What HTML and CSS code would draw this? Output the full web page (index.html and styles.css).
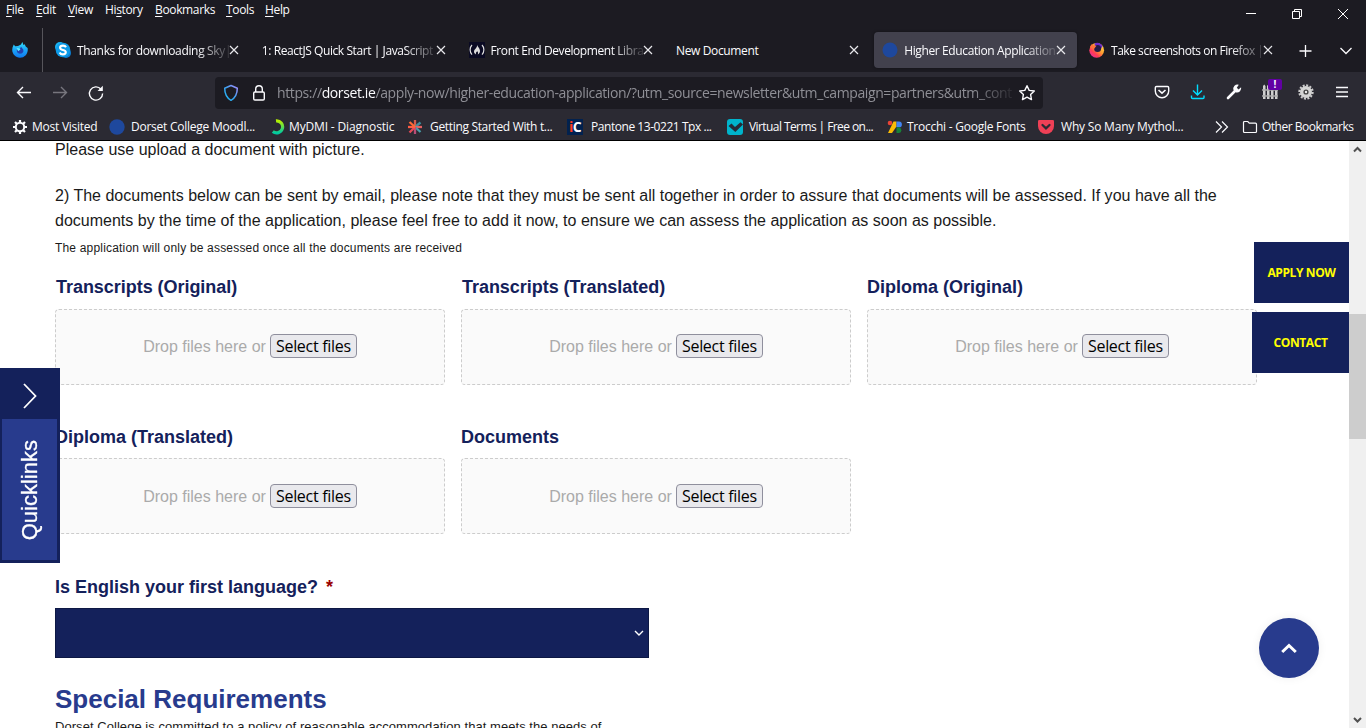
FILE: index.html
```html
<!DOCTYPE html>
<html lang="en">
<head>
<meta charset="utf-8">
<title>Higher Education Application</title>
<link rel="stylesheet" href="styles.css">
</head>
<body>
<div class="window">
  <header class="chrome">
    <div class="menubar">
      <nav class="menus"><span class="m1"><u>F</u>ile</span><span class="m2"><u>E</u>dit</span><span class="m3"><u>V</u>iew</span><span class="m4">Hi<u>s</u>tory</span><span class="m5"><u>B</u>ookmarks</span><span class="m6"><u>T</u>ools</span><span class="m7"><u>H</u>elp</span></nav>
      <div class="winctl">
        <svg width="46" height="28" viewBox="0 0 46 28"><path d="M18 13.500h10" stroke="#fff"/></svg>
        <svg width="46" height="28" viewBox="0 0 46 28"><path d="M18.500 11.500h7v7h-7zM20.500 11v-1.500h7v7H26" stroke="#fff" fill="none"/></svg>
        <svg width="46" height="28" viewBox="0 0 46 28"><path d="M18 9l10 10M28 9l-10 10" stroke="#fff" fill="none"/></svg>
      </div>
    </div>

    <div class="tabbar">
      <div class="pinned">
        <svg width="16" height="16" viewBox="0 0 16 16"><defs><linearGradient id="fx" x1="0" y1="0" x2="0" y2="1"><stop offset="0" stop-color="#35e0fb"/><stop offset=".5" stop-color="#1ba5f8"/><stop offset="1" stop-color="#0f78ee"/></linearGradient></defs><path d="M1.800 2.600l1.300 1.700L6 4l3-1.600L10.300 0l1.200 3 1.200-.8 1 2.200L15.600 6c1 5-2.600 9.700-7.600 9.700S-.6 11 .4 6.500C.6 5 1.200 4 1.800 2.600z" fill="url(#fx)"/><path d="M5 7l2.500.7L9 4.800l2.200 2.700c.8 2.500-.8 4.200-3.200 4.200S4.300 9.700 5 7z" fill="#2340b0"/><path d="M4.500 6l2.500.2L8.500 7.500l-2.300 1.700z" fill="#5be9ff"/></svg>
      </div>
      <div class="tabs">
        <div class="tab">
          <svg class="ico" width="16" height="16" viewBox="0 0 16 16"><rect width="10" height="10" rx="5" fill="#1ab4f3"/><rect x="6" y="6" width="10" height="10" rx="5" fill="#0c7fd4"/><circle cx="8" cy="8" r="7.300" fill="#0d9be8"/><path d="M11 5.200C10.400 4 9.300 3.600 8 3.600c-1.700 0-2.900.8-2.900 2.100 0 3 5.700 1.500 5.700 4.400 0 1.500-1.200 2.300-2.900 2.300-1.500 0-2.600-.6-3.200-1.900" fill="none" stroke="#fff" stroke-width="2.100"/></svg>
          <span class="t t1">Thanks for downloading Sky|</span>
          <svg class="x" width="10" height="10" viewBox="0 0 10 10"><path d="M1 1l8 8M9 1L1 9"/></svg>
        </div>
        <div class="tab">
          <span class="t t2">1: ReactJS Quick Start | JavaScript</span>
          <svg class="x" width="10" height="10" viewBox="0 0 10 10"><path d="M1 1l8 8M9 1L1 9"/></svg>
        </div>
        <div class="tab">
          <svg class="ico" width="16" height="16" viewBox="0 0 16 16"><rect width="16" height="16" fill="#0a0a23"/><path d="M3 3C.5 5.500.5 10 3 12.700M13 3c2.500 2.500 2.500 7 0 9.700" stroke="#ddd" fill="none" stroke-width="1.200"/><path d="M8 2.700c.5 2.300 3.300 3.700 3 6.500-.2 1.800-1.200 2.600-2.200 3.200.5-1.500.3-2.400-.7-3.100-.7.900-1.700 1.400-1 3.100-1.600-.6-2.400-2-2-3.600C5.600 6.800 8.500 6 8 2.700z" fill="#ddd"/></svg>
          <span class="t t3">Front End Development Libra</span>
          <svg class="x" width="10" height="10" viewBox="0 0 10 10"><path d="M1 1l8 8M9 1L1 9"/></svg>
        </div>
        <div class="tab">
          <span class="t t4">New Document</span>
          <svg class="x" width="10" height="10" viewBox="0 0 10 10"><path d="M1 1l8 8M9 1L1 9"/></svg>
        </div>
        <div class="tab active">
          <svg class="ico" width="16" height="16" viewBox="0 0 16 16"><circle cx="8" cy="8" r="7.500" fill="#1e489d"/></svg>
          <span class="t t5">Higher Education Application</span>
          <svg class="x" width="10" height="10" viewBox="0 0 10 10"><path d="M1 1l8 8M9 1L1 9"/></svg>
        </div>
        <div class="tab">
          <svg class="ico" width="16" height="16" viewBox="0 0 16 16"><defs><linearGradient id="fm" x1=".9" y1=".1" x2=".2" y2=".9"><stop offset="0" stop-color="#ffe14a"/><stop offset=".45" stop-color="#ff9a30"/><stop offset=".75" stop-color="#ff3d52"/><stop offset="1" stop-color="#f0308a"/></linearGradient></defs><circle cx="7.700" cy="8.300" r="7.400" fill="url(#fm)"/><path d="M5.500 1.500C8 0 12 .5 13.500 4.500L11 8 6 5z" fill="#6c2bd0"/><circle cx="8.600" cy="6.600" r="3.500" fill="#241c45"/><path d="M1 4.500l2-2.500 1 1.500 3.500.3L5 7z" fill="#ff7139"/></svg>
          <span class="t t6">Take screenshots on Firefox |</span>
          <svg class="x" width="10" height="10" viewBox="0 0 10 10"><path d="M1 1l8 8M9 1L1 9"/></svg>
        </div>
      </div>
      <div class="tabtools">
        <svg width="40" height="44" viewBox="0 0 40 44"><path d="M19.500 17v12M13.500 23h12" stroke="#fbfbfe" stroke-width="1.300"/></svg>
        <svg width="40" height="44" viewBox="0 0 40 44"><path d="M14.500 20l5.500 5.500 5.500-5.500" stroke="#fbfbfe" fill="none" stroke-width="1.300"/></svg>
      </div>
    </div>

    <div class="navbar">
      <div class="navbtns">
        <svg width="36" height="41" viewBox="0 0 36 41"><path d="M31 20.500H17.500M23 15l-5.500 5.500L23 26" stroke="#fbfbfe" fill="none" stroke-width="1.400"/></svg>
        <svg width="36" height="41" viewBox="0 0 36 41"><path d="M17 20.500h13.500M25 15l5.500 5.500L25 26" stroke="#77767e" fill="none" stroke-width="1.400"/></svg>
        <svg width="36" height="41" viewBox="0 0 36 41"><path d="M29 17.200A6.600 6.600 0 1 0 30.600 21.500" stroke="#fbfbfe" fill="none" stroke-width="1.400"/><path d="M30.800 13.800v5.200h-5.200z" fill="#fbfbfe"/></svg>
      </div>
      <div class="urlbar">
        <svg width="16" height="18" viewBox="0 0 16 18"><defs><linearGradient id="sh" x1="0" y1="1" x2="1" y2="0"><stop offset="0" stop-color="#18b9f5"/><stop offset=".5" stop-color="#3ea0f0"/><stop offset="1" stop-color="#a88cff"/></linearGradient></defs><path d="M8 1.500L14.300 4.200c0 5.300-1.800 9.500-6.300 12.100C3.500 13.700 1.700 9.500 1.700 4.200z" fill="none" stroke="url(#sh)" stroke-width="1.500" stroke-linejoin="round"/></svg>
        <svg width="14" height="18" viewBox="0 0 14 18"><rect x="1.700" y="8" width="10.600" height="8" rx="1.200" fill="none" stroke="#fbfbfe" stroke-width="1.400"/><path d="M3.700 8V5a3.300 3.300 0 0 1 6.600 0v3" fill="none" stroke="#fbfbfe" stroke-width="1.400"/></svg>
        <span class="url">https://<b>dorset.ie</b>/apply-now/higher-education-application/?utm_source=newsletter&amp;utm_campaign=partners&amp;utm_cont</span>
        <svg width="18" height="18" viewBox="0 0 18 18"><path d="M9 1.700l2.200 4.700 5.100.6-3.700 3.500.9 5.100L9 13.100l-4.500 2.500.9-5.100L1.700 7l5.100-.6z" fill="none" stroke="#fbfbfe" stroke-width="1.400" stroke-linejoin="round"/></svg>
      </div>
      <div class="tools">
        <svg width="36" height="41" viewBox="0 0 36 41"><path d="M12.500 14.500h11a1.200 1.200 0 0 1 1.200 1.200V19a6.700 6.700 0 0 1-13.400 0v-3.300a1.200 1.200 0 0 1 1.200-1.200z" fill="none" stroke="#fbfbfe" stroke-width="1.400"/><path d="M14.500 18l3.500 3.200 3.500-3.200" fill="none" stroke="#fbfbfe" stroke-width="1.600"/></svg>
        <svg width="36" height="41" viewBox="0 0 36 41"><path d="M17.500 12.500v10M13 18.500l4.500 4.500 4.500-4.500M11.500 23.500v2a1 1 0 0 0 1 1h10.500a1 1 0 0 0 1-1v-2" fill="none" stroke="#00ddff" stroke-width="1.400"/></svg>
        <svg width="36" height="41" viewBox="0 0 36 41"><path d="M12 26l7-7" stroke="#fbfbfe" stroke-width="2.600" stroke-linecap="round"/><path d="M22.800 12.700a4.300 4.300 0 0 0-5.300 5.500l2.600 2.300a4.300 4.300 0 0 0 5-5.200l-2.600 2.100-1.700-1.700z" fill="#fbfbfe"/></svg>
        <div class="ext">
          <svg width="36" height="41" viewBox="0 0 36 41"><path d="M11 27V14l1.200-1.500L13.500 14v13zM15 27V14l1.200-1.500L17.500 14v13zM19 27V15h2.500v12zM23 27V15h2.500v12z" fill="#d0d0d0"/><path d="M10 18h16M10 24h16" stroke="#aaa" stroke-width="1.400"/></svg>
          <span class="badge">!</span>
        </div>
        <svg width="36" height="41" viewBox="0 0 36 41"><circle cx="18" cy="20" r="6.600" fill="none" stroke="#ccc" stroke-width="2.200" stroke-dasharray="2 1.450"/><circle cx="18" cy="20" r="4.300" fill="#444" stroke="#d4d4d4" stroke-width="3.400"/><circle cx="18" cy="20" r="1.200" fill="#eee"/></svg>
        <svg width="36" height="41" viewBox="0 0 36 41"><path d="M12 15.500h12M12 20h12M12 24.500h12" stroke="#fbfbfe" stroke-width="1.300"/></svg>
      </div>
    </div>

    <div class="bookmarks">
      <div class="bm b1"><svg width="16" height="16" viewBox="0 0 16 16"><path d="M8 1v14M1 8h14M3 3l10 10M13 3L3 13" stroke="#fbfbfe" stroke-width="2.200"/><circle cx="8" cy="8" r="4.200" fill="#2b2a33" stroke="#fbfbfe" stroke-width="2"/></svg><span>Most Visited</span></div>
      <div class="bm b2"><svg width="16" height="16" viewBox="0 0 16 16"><circle cx="8" cy="8" r="7.700" fill="#1e489d"/></svg><span>Dorset College Moodl...</span></div>
      <div class="bm b3"><svg width="16" height="16" viewBox="0 0 16 16"><defs><linearGradient id="dm" x1="0" y1="0" x2="0" y2="1"><stop offset="0" stop-color="#b6f000"/><stop offset="1" stop-color="#00c8a0"/></linearGradient></defs><path d="M5 1.900A6 6 0 1 1 1.800 12.500" fill="none" stroke="url(#dm)" stroke-width="3.200"/></svg><span>MyDMI - Diagnostic</span></div>
      <div class="bm b4"><svg width="16" height="16" viewBox="0 0 16 16" stroke-width="2.300"><path d="M8 8V1" stroke="#d35b4a"/><path d="M8 8l5.500-4.500" stroke="#3f8d9b"/><path d="M8 8h7" stroke="#e46262"/><path d="M8 8l5.500 5" stroke="#4a9da8"/><path d="M8 8v7" stroke="#b94d76"/><path d="M8 8l-5.500 5.500" stroke="#e44a58"/><path d="M8 8H1" stroke="#ff5d45"/><path d="M8 8L2.500 3" stroke="#ff6a35"/></svg><span>Getting Started With t...</span></div>
      <div class="bm b5"><span class="ic"><i>i</i>C</span><span>Pantone 13-0221 Tpx ...</span></div>
      <div class="bm b6"><svg width="16" height="16" viewBox="0 0 16 16"><rect width="16" height="16" rx="3" fill="#00b4cc"/><path d="M1.500 7l3-2.500L8 8l5.500-4.800L16 5.500 8.300 13z" fill="#252b38"/></svg><span>Virtual Terms | Free on...</span></div>
      <div class="bm b7"><svg width="16" height="16" viewBox="0 0 16 16"><circle cx="3" cy="4" r="2.300" fill="#ea4335"/><path d="M6.500 2.500h3v5L5 14H1z" fill="#fbbc04"/><path d="M9.500 2.500H12a2.900 2.900 0 0 1 0 5.800H9.500z" fill="#4285f4"/><path d="M9.500 8.300H12a2.900 2.900 0 0 1 0 5.700H9.500z" fill="#188038"/></svg><span>Trocchi - Google Fonts</span></div>
      <div class="bm b8"><svg width="16" height="16" viewBox="0 0 16 16"><path d="M1.300 1h13.400A1.300 1.300 0 0 1 16 2.300V7a8 8 0 0 1-16 0V2.300A1.300 1.300 0 0 1 1.300 1z" fill="#ef4056"/><path d="M4.500 6L8 9.300 11.500 6" stroke="#2b2a33" stroke-width="2.300" fill="none" stroke-linecap="round"/></svg><span>Why So Many Mythol...</span></div>
      <div class="bm b9"><svg width="16" height="16" viewBox="0 0 16 16"><path d="M2 2.500L7.500 8 2 13.500M8 2.500L13.500 8 8 13.500" stroke="#fbfbfe" fill="none" stroke-width="1.200"/></svg></div>
      <div class="bm b10"><svg width="16" height="16" viewBox="0 0 16 16"><path d="M1.500 3.500a1 1 0 0 1 1-1h3.300l1.500 1.700h6.200a1 1 0 0 1 1 1v7.300a1 1 0 0 1-1 1h-11a1 1 0 0 1-1-1z" stroke="#fbfbfe" fill="none" stroke-width="1.200"/></svg><span>Other Bookmarks</span></div>
    </div>
  </header>

  <div class="viewport">
    <main class="page">
      <p class="body first">Please use upload a document with picture.</p>
      <p class="body">2) The documents below can be sent by email, please note that they must be sent all together in order to assure that documents will be assessed. If you have all the<br>documents by the time of the application, please feel free to add it now, to ensure we can assess the application as soon as possible.</p>
      <p class="note">The application will only be assessed once all the documents are received</p>
      <div class="uploads">
        <div class="field"><label class="lbl in">Transcripts (Original)</label><div class="drop"><span>Drop files here or</span><button>Select files</button></div></div>
        <div class="field"><label class="lbl in">Transcripts (Translated)</label><div class="drop"><span>Drop files here or</span><button>Select files</button></div></div>
        <div class="field"><label class="lbl">Diploma (Original)</label><div class="drop"><span>Drop files here or</span><button>Select files</button></div></div>
        <div class="field"><label class="lbl low">Diploma (Translated)</label><div class="drop second"><span>Drop files here or</span><button>Select files</button></div></div>
        <div class="field"><label class="lbl low">Documents</label><div class="drop second"><span>Drop files here or</span><button>Select files</button></div></div>
      </div>
      <label class="lbl english">Is English your first language? <em>*</em></label>
      <div class="select"><svg width="10" height="8" viewBox="0 0 10 8"><path d="M1 2l4 4 4-4" stroke="#fff" stroke-width="1.400" fill="none"/></svg></div>
      <h2>Special Requirements</h2>
      <p class="note policy">Dorset College is committed to a policy of reasonable accommodation that meets the needs of</p>
    </main>
    <div class="scroll">
      <svg width="17" height="17" viewBox="0 0 17 17"><path d="M5 10.500L8.500 7l3.500 3.500" stroke="#505050" stroke-width="2" fill="none"/></svg>
      <div class="thumb"></div>
      <svg class="down" width="17" height="17" viewBox="0 0 17 17"><path d="M5 7l3.500 3.500L12 7" stroke="#505050" stroke-width="2" fill="none"/></svg>
    </div>

    <aside class="quick">
      <div class="qarrow"><svg width="16" height="26" viewBox="0 0 16 26"><path d="M2 1l11.500 12L2 25" stroke="#fff" stroke-width="1.800" fill="none"/></svg></div>
      <div class="qlabel"><span>Quicklinks</span></div>
    </aside>
    <div class="cta"><a class="apply">APPLY NOW</a><a class="contact">CONTACT</a></div>
    <div class="totop"><svg width="16" height="11" viewBox="0 0 16 11"><path d="M1.200 9L8 2.500 14.800 9" stroke="#fff" stroke-width="3" fill="none"/></svg></div>
  </div>
</div>
</body>
</html>
```

FILE: styles.css
```css
* { box-sizing: border-box; }
body { margin: 0; overflow: hidden; background: #fff; }
.window { width: 1366px; height: 728px; display: flex; flex-direction: column; overflow: hidden; }
svg { display: block; flex: none; }

.chrome { height: 141px; background: #2b2a33; border-bottom: 1px solid #000; color: #fbfbfe; font: 12px "Open Sans", "Noto Sans", sans-serif; white-space: nowrap; flex: none; }
.menubar { height: 28px; background: #1c1b22; display: flex; justify-content: space-between; }
.menus { display: flex; padding-left: 6px; line-height: 20px; letter-spacing: -.35px; }
.menus u { text-underline-offset: 2px; }
.m1 { width: 30px; } .m2 { width: 32px; } .m3 { width: 37px; } .m4 { width: 50px; }
.m5 { width: 71px; } .m6 { width: 39px; }
.winctl { display: flex; }

.tabbar { height: 44px; background: #1c1b22; display: flex; }
.pinned { width: 43px; padding: 14px 0 0 12px; border-right: 1px solid #56555b; }
.tabs { display: flex; padding: 4px 0 0 4px; gap: 3.8px; flex: none; }
.tab { width: 203px; height: 36px; border-radius: 4px; display: flex; align-items: center; padding: 0 11px 0 8px; }
.tab .ico { margin-right: 6px; }
.t { flex: 1; min-width: 0; overflow: hidden; letter-spacing: -.36px; mask-image: linear-gradient(to left, #0002, #000 32px); }
.t1 { letter-spacing: -.34px; }
.t2 { letter-spacing: -.42px; }
.t3 { letter-spacing: -.42px; }
.t4 { mask-image: none; padding-left: .6px; }
.t5 { letter-spacing: -.38px; }
.t6 { letter-spacing: -.46px; }
.active { background: #42414d; box-shadow: 0 0 3px #0006; }
.x path { stroke: #e8e8ec; stroke-width: 1.2; fill: none; }
.tabtools { display: flex; margin-left: auto; }

.navbar { height: 41px; display: flex; align-items: center; }
.navbtns { display: flex; width: 215px; }
.urlbar { width: 828px; height: 32px; background: #1c1b22; border-radius: 4px; display: flex; align-items: center; padding: 0 7px 0 8px; }
.urlbar svg:nth-child(2) { margin: 0 11px 0 13px; }
.url { flex: 1; min-width: 0; overflow: hidden; font-size: 14px; letter-spacing: -.39px; color: #8f8f96; mask-image: linear-gradient(to left, #0002, #000 40px); margin-right: 6px; }
.url b { font-weight: 400; color: #fbfbfe; }
.tools { display: flex; margin-left: auto; padding-right: 6px; }
.ext { position: relative; }
.badge { position: absolute; left: 16px; top: 7px; width: 14px; height: 11px; background: #6200a4; border-radius: 2px; font: bold 10px/11px "Open Sans", sans-serif; text-align: center; }

.bookmarks { height: 27px; display: flex; align-items: center; padding: 0 0 0 12px; }
.bm { display: flex; align-items: center; gap: 5px; letter-spacing: -.25px; flex: none; }
.b1 { width: 97px; gap: 4px; } .b2 { width: 162px; gap: 6px; }
.b3 { width: 136px; gap: 2px; letter-spacing: -.15px; }
.b4 { width: 160px; gap: 7px; letter-spacing: -.33px; }
.b5 { width: 160px; gap: 8px; letter-spacing: -.45px; }
.b6 { width: 160px; gap: 6px; letter-spacing: -.58px; }
.b7 { width: 151px; gap: 4px; }
.b8 { width: 176px; gap: 7px; letter-spacing: -.2px; }
.b9 { width: 28px; }
.b10 { gap: 4px; letter-spacing: -.5px; }
.ic { width: 16px; height: 16px; background: #01214f; font: bold 14px/16px "Open Sans", sans-serif; text-align: center; letter-spacing: -.5px; }
.ic i { color: #ff3b1d; font-style: normal; }

.viewport { position: relative; height: 587px; display: flex; overflow: hidden; font-family: "Liberation Sans", Arial, sans-serif; color: #1a1a1a; }
.page { width: 1349px; padding-left: 55px; background: #fff; }
.body { margin: 0; font-size: 16px; line-height: 25px; letter-spacing: .003px; white-space: nowrap; }
.first { margin: -4px 0 21px; }
.note { margin: 5px 0 0; font-size: 12px; line-height: 20px; letter-spacing: .185px; white-space: nowrap; }
.uploads { display: grid; grid-template-columns: 390px 390px 390px; column-gap: 16px; row-gap: 38px; padding-top: 16px; }
.field { height: 111px; }
.lbl { display: block; height: 35px; font-size: 18px; font-weight: bold; line-height: 26px; color: #14215b; white-space: nowrap; }
.in { padding-left: 1px; }
.low { padding-top: 1px; }
.in { letter-spacing: -.04px; }
.lbl em { color: #900; font-style: normal; margin-left: 3px; }
.drop { height: 76px; border: 1px dashed #ccc; border-radius: 4px; background: #fafafa; color: #aaa; display: flex; align-items: center; justify-content: center; gap: 4px; font-size: 16px; padding-bottom: 2px; }
.drop span { padding-top: 2px; }
.second { padding-bottom: 0; }
.drop button { width: 87px; height: 24px; padding: 0; border: 1px solid #8f8f9d; border-radius: 4px; background: #e9e9ed; color: #000; font: 16px/20px "Open Sans", "Noto Sans", sans-serif; letter-spacing: -.3px; white-space: nowrap; }
.english { margin-top: 40px; height: 34px; }
.select { width: 594px; height: 50px; background: #14215b; border: 1px solid #0d1844; display: flex; align-items: center; justify-content: flex-end; padding-right: 4px; }
h2 { margin: 25px 0 0; font-size: 26px; line-height: 32px; color: #283b8d; }
.policy { margin-top: 2px; font-size: 13px; letter-spacing: .05px; }

.scroll { width: 17px; background: #f0f0f0; display: flex; flex-direction: column; }
.thumb { height: 125px; margin-top: 156px; background: #cdcdcd; }
.down { margin-top: auto; }

.quick { position: absolute; left: 0; top: 227px; width: 60px; height: 195px; background: #14215b; padding: 0 3px 3px 2px; }
.qarrow { height: 51px; display: flex; align-items: center; justify-content: center; padding: 4px 0 0 1px; }
.qlabel { height: 141px; background: #283b8d; display: flex; align-items: center; justify-content: center; color: #fff; font-size: 22px; padding-top: 1px; -webkit-text-stroke: .3px #fff; }
.qlabel span { writing-mode: vertical-rl; transform: rotate(180deg); }
.cta { position: absolute; right: 17px; top: 101px; display: flex; flex-direction: column; align-items: flex-end; gap: 9px; font: bold 12px/61px "Open Sans", sans-serif; color: #ff0; text-align: center; letter-spacing: -.4px; }
.cta a { height: 61px; background: #14215b; }
.apply { width: 95px; }
.contact { width: 97px; }
.totop { position: absolute; left: 1259px; top: 477px; width: 60px; height: 60px; border-radius: 50%; background: #283b8d; box-shadow: 0 0 10px #00000010; display: flex; align-items: center; justify-content: center; }
```
